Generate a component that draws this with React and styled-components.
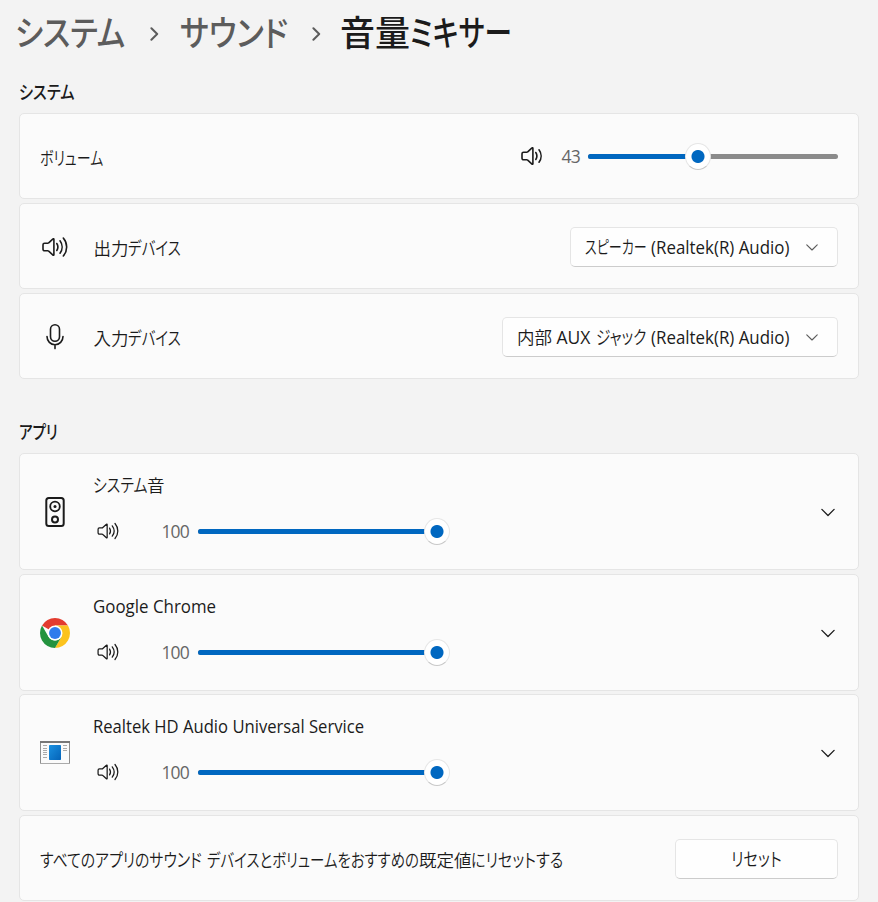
import React, { Component } from 'react';
import styled, { createGlobalStyle } from 'styled-components';

const apps = [
    { id: 'system', volume: 100, name: [{ text: 'システム', width: 54, squeeze: 0.855 }, { text: '音', width: 18 }] },
    { id: 'chrome', volume: 100, name: [{ text: 'Google Chrome', width: 123, squeeze: 0.965, latin: true }] },
    { id: 'realtek', volume: 100, name: [{ text: 'Realtek HD Audio Universal Service', width: 271, squeeze: 0.95, latin: true }] },
];

// mixed kana / kanji / latin text, kana is set narrower than the rest
const Label = ({ runs, ...rest }) => (
    <TextLine {...rest}>
        {runs.map((run, i) => (
            <Run key={i} $width={run.width} $squeeze={run.squeeze} $latin={run.latin} $gap={run.gap}>{run.text}</Run>
        ))}
    </TextLine>
);

const SpeakerIcon = ({ waves = 2, width = 24, stroke = 1.5 }) => (
    <svg width={width} height="24" viewBox={`0 0 ${width} 24`} fill="none" stroke="#1b1b1b" strokeWidth={stroke} strokeLinecap="round" strokeLinejoin="round">
        <path d="M2.6 8.2h3.1c.4 0 .7-.1 1-.4l4.3-3.9c.4-.4.9-.1.9.4v15.4c0 .5-.5.8-.9.4l-4.3-3.9c-.3-.3-.6-.4-1-.4H2.6c-.9 0-1.6-.7-1.6-1.6V9.8c0-.9.7-1.6 1.6-1.6Z" />
        <path d="M14.8 8.5c1.4 2.2 1.4 4.8 0 7" />
        <path d="M18 5.8c2.8 3.7 2.8 8.7 0 12.4" />
        {waves > 2 && <path d="M21.3 3c4.5 5.2 4.5 12.8 0 18" />}
    </svg>
);

const MicIcon = () => (
    <svg width="20" height="28" viewBox="0 0 20 28" fill="none" stroke="#1b1b1b" strokeWidth="1.6" strokeLinecap="round">
        <rect x="5.5" y="1.8" width="9" height="16.4" rx="4.5" />
        <path d="M2 13.5c0 4.7 3.6 8.3 8 8.3s8-3.6 8-8.3M10 22v3.6" />
    </svg>
);

const SpeakerBoxIcon = () => (
    <svg width="30" height="32" viewBox="0 0 30 32" fill="none" stroke="#1b1b1b" strokeWidth="2">
        <rect x="6.3" y="2" width="17.4" height="28" rx="2.5" />
        <circle cx="15" cy="10.5" r="4.8" strokeWidth="1.8" />
        <circle cx="15" cy="10.5" r="1.5" fill="#1b1b1b" stroke="none" />
        <circle cx="15" cy="23.5" r="3" />
    </svg>
);

const ChromeIcon = () => (
    <svg width="30" height="30" viewBox="0 0 48 48">
        <path fill="#e33b2e" d="M24 24 3.22 12A24 24 0 0 1 44.78 12H24Z" />
        <path fill="#fcc31e" d="M24 12h20.78A24 24 0 0 1 24 48l10.39-18Z" />
        <path fill="#24933f" d="M3.22 12 13.61 30A12 12 0 0 0 34.39 30L24 48A24 24 0 0 1 3.22 12Z" />
        <circle cx="24" cy="24" r="12" fill="#fff" />
        <circle cx="24" cy="24" r="9.5" fill="#2f7cec" />
    </svg>
);

const WindowIcon = () => (
    <svg width="30" height="24" viewBox="0 0 30 24">
        <defs>
            <linearGradient id="pane" x1="0" y1="0" x2="1" y2="1">
                <stop offset="0" stopColor="#1a90e0" />
                <stop offset="1" stopColor="#0463b8" />
            </linearGradient>
        </defs>
        <path fill="#fafafa" stroke="#8e8e8e" d="M.5.5h29v22H.5z" />
        <path fill="#777" d="M0 0h30v2H0z" />
        <path fill="#aaa" d="M0 22h30v1H0z" />
        <rect x="9" y="4" width="12" height="15" rx=".7" fill="url(#pane)" />
        <path stroke="#aaa" d="M3 4.5h4M3 7.5h4M3 9.5h4M3 11.5h4M3 13.5h4M3 16.5h4M23 4.5h4M23 7.5h4M23 9.5h4" />
    </svg>
);

const appIcons = { system: <SpeakerBoxIcon />, chrome: <ChromeIcon />, realtek: <WindowIcon /> };

const Chevron = ({ size = 14, color = '#1b1b1b', right }) => (
    <svg width={size} height={size} viewBox="0 0 14 14" fill="none" stroke={color} strokeWidth={right ? 2 : 1.3} strokeLinecap="round" strokeLinejoin="round">
        <path d={right ? 'M4.4 1.2 10.2 7l-5.800 5.800' : 'M.9 4.4 7 10.5l6.100-6.100'} />
    </svg>
);

const Slider = ({ value }) => {
    const center = 12.5 + value * 2.264;
    return (
        <Track>
            <Fill style={{ width: center }} />
            <Thumb style={{ left: center - 13 }} />
        </Track>
    );
};

class App extends Component {

    state = {
        volume: 43
    }

    render() {
        return (
            <Page lang="ja">
                <GlobalStyle />
                <Breadcrumb>
                    <Crumb $width={109} $squeeze={0.865}>システム</Crumb>
                    <CrumbArrow $width={56}><Chevron right color="#5c5c5c" /></CrumbArrow>
                    <Crumb $width={108} $squeeze={0.875}>サウンド</Crumb>
                    <CrumbArrow $width={52}><Chevron right color="#5c5c5c" /></CrumbArrow>
                    <Crumb $current $width={70}>音量</Crumb>
                    <Crumb $current $width={101} $squeeze={0.79}>ミキサー</Crumb>
                </Breadcrumb>

                <SectionTitle $height={47}><Run $width={56} $squeeze={0.87}>システム</Run></SectionTitle>
                <List>
                    <Card>
                        <Label runs={[{ text: 'ボリューム', width: 64, squeeze: 0.8 }]} />
                        <MasterVolume>
                            <SpeakerIcon width={22} stroke={1.6} />
                            <Value $width={45}>{this.state.volume}</Value>
                            <Slider value={this.state.volume} />
                        </MasterVolume>
                    </Card>
                    <Card>
                        <IconSlot><SpeakerIcon waves={3} width={27} stroke={1.6} /></IconSlot>
                        <Label runs={[{ text: '出力', width: 34.5 }, { text: 'デバイス', width: 54, squeeze: 0.83 }]} />
                        <Select $width={268}>
                            <Label runs={[
                                { text: 'スピーカー', width: 61, squeeze: 0.745 },
                                { text: '(Realtek(R) Audio)', width: 139, squeeze: 0.965, latin: true, gap: 5 },
                            ]} />
                            <Chevron size={12} color="#5c5c5c" />
                        </Select>
                    </Card>
                    <Card>
                        <IconSlot><MicIcon /></IconSlot>
                        <Label runs={[{ text: '入力', width: 34.5 }, { text: 'デバイス', width: 54, squeeze: 0.83 }]} />
                        <Select $width={336}>
                            <Label runs={[
                                { text: '内部', width: 35 },
                                { text: 'AUX', width: 34, latin: true, gap: 4.5 },
                                { text: 'ジャック', width: 51, squeeze: 0.84, gap: 5 },
                                { text: '(Realtek(R) Audio)', width: 139, squeeze: 0.965, latin: true, gap: 4.5 },
                            ]} />
                            <Chevron size={12} color="#5c5c5c" />
                        </Select>
                    </Card>
                </List>

                <SectionTitle $height={74}><Run $width={39} $squeeze={0.83}>アプリ</Run></SectionTitle>
                <List>
                    {apps.map(app => (
                        <AppCard key={app.id} $tight={app.id === 'realtek'}>
                            <IconSlot>{appIcons[app.id]}</IconSlot>
                            <AppBody>
                                <Label runs={app.name} />
                                <AppVolume>
                                    <SmallIcon><SpeakerIcon waves={3} width={27} stroke={1.5} /></SmallIcon>
                                    <Value $width={78} $raised>{app.volume}</Value>
                                    <Slider value={app.volume} />
                                </AppVolume>
                            </AppBody>
                            <Chevron />
                        </AppCard>
                    ))}
                    <Card>
                        <Label runs={[
                            { text: 'すべてのアプリのサウンド', width: 162, squeeze: 0.852 },
                            { text: 'デバイスとボリュームをおすすめの', width: 212.5, squeeze: 0.825, gap: 4.5 },
                            { text: '既定値', width: 52 },
                            { text: 'にリセットする', width: 92, squeeze: 0.865 },
                        ]} />
                        <Button><Run $width={51} $squeeze={0.87}>リセット</Run></Button>
                    </Card>
                </List>
            </Page>
        );
    }
}

export default App;

const GlobalStyle = createGlobalStyle`
    body {
        margin: 0;
        background: #f3f3f3;
        overflow: hidden;
    }
    * {
        box-sizing: border-box;
    }
    svg {
        display: block;
        flex: none;
    }
`;

const Page = styled.div`
    width: 878px;
    height: 902px;
    padding: 0 19px;
    overflow: hidden;
    color: #1b1b1b;
    font-family: "Noto Sans CJK JP", sans-serif;
    font-size: 17.5px;
    font-weight: 350;
    font-feature-settings: 'palt';
`;

const Run = styled.span`
    display: block;
    flex: none;
    width: ${props => props.$width}px;
    margin-left: ${props => props.$gap || 0}px;
    white-space: nowrap;
    line-height: 26px;
    transform: scale(${props => props.$squeeze || 1}, ${props => (props.$squeeze && !props.$latin ? 1.07 : 1)});
    transform-origin: 0 50%;
    ${props => props.$latin && `
        font-family: "Open Sans", sans-serif;
        font-weight: 400;
    `}
`;

const Crumb = styled(Run)`
    color: ${props => props.$current ? '#1b1b1b' : '#5c5c5c'};
    font-size: 35px;
    font-weight: 500;
    line-height: 62px;
    transform: scaleX(${props => props.$squeeze || 1});
`;

const TextLine = styled.div`
    display: flex;
    align-items: center;
    height: 26px;
`;

const Breadcrumb = styled.nav`
    display: flex;
    align-items: flex-start;
    height: 66px;
    margin-left: -4px;
`;

const CrumbArrow = styled.div`
    display: flex;
    justify-content: center;
    width: ${props => props.$width}px;
    padding: 27px 0 0 4px;
`;

const SectionTitle = styled.h2`
    display: flex;
    align-items: flex-end;
    height: ${props => props.$height}px;
    margin: 0;
    padding-bottom: 8px;
    font-size: 17.5px;
    font-weight: 500;
`;

const List = styled.div`
    display: flex;
    flex-direction: column;
    gap: 4px;
`;

const Card = styled.section`
    display: flex;
    align-items: center;
    height: 86px;
    padding: 0 20px;
    border: 1px solid #e5e5e5;
    border-radius: 5px;
    background: #fbfbfb;
    > ${TextLine} {
        margin-top: 3px;
    }
    > :last-child {
        margin-left: auto;
    }
`;

const AppCard = styled(Card)`
    height: 117px;
    margin-top: ${props => props.$tight ? -1 : 0}px;
    padding-right: 23px;
`;

const IconSlot = styled.div`
    display: flex;
    justify-content: center;
    width: 30px;
    padding-top: 1px;
    margin-right: 23.5px;
`;

const MasterVolume = styled.div`
    display: flex;
    align-items: center;
`;

const AppBody = styled.div`
    display: flex;
    flex-direction: column;
    gap: 21px;
    margin-left: -0.5px;
    padding-bottom: 7px;
`;

const AppVolume = styled.div`
    display: flex;
    align-items: center;
    height: 26px;
`;

const SmallIcon = styled.div`
    width: 23px;
    margin: 0 0 2px 4px;
    svg {
        width: 23px;
        height: 20px;
    }
`;

const Value = styled.span`
    width: ${props => props.$width}px;
    padding-right: ${props => props.$raised ? 9 : 8}px;
    padding-bottom: ${props => props.$raised ? 2 : 0}px;
    text-align: right;
    color: #666;
    font-family: "Open Sans", sans-serif;
    font-size: 17.5px;
    font-weight: 400;
    letter-spacing: -0.8px;
`;

const Track = styled.div`
    position: relative;
    width: 250px;
    height: 5px;
    border-radius: 3px;
    background: #8b8b8b;
`;

const Fill = styled.div`
    height: 5px;
    border-radius: 3px;
    background: #0067c0;
`;

const Thumb = styled.div`
    position: absolute;
    top: -11px;
    width: 26px;
    height: 27px;
    border: 1px solid #e6e6e6;
    border-bottom-color: #c8c8c8;
    border-radius: 50%;
    background: radial-gradient(circle, #0067c0 6px, #fff 7px);
`;

const Select = styled.div`
    display: flex;
    align-items: center;
    justify-content: space-between;
    width: ${props => props.$width}px;
    height: 40px;
    margin-top: 2px;
    padding: 0 19px 0 14px;
    border: 1px solid #e5e5e5;
    border-bottom-color: #cccccc;
    border-radius: 5px;
    background: #fefefe;
`;

const Button = styled.button`
    display: flex;
    align-items: center;
    justify-content: center;
    width: 163px;
    height: 40px;
    margin-top: 2px;
    border: 1px solid #e5e5e5;
    border-bottom-color: #cccccc;
    border-radius: 5px;
    background: #fefefe;
    color: inherit;
    font: inherit;
    font-feature-settings: inherit;
`;
